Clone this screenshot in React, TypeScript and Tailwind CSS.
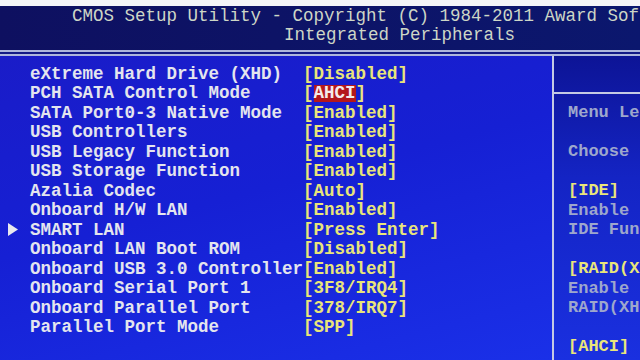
const items: { label: string; value: string; hot?: boolean; sub?: boolean }[] = [
  { label: "eXtreme Hard Drive (XHD)", value: "Disabled" },
  { label: "PCH SATA Control Mode", value: "AHCI", hot: true },
  { label: "SATA Port0-3 Native Mode", value: "Enabled" },
  { label: "USB Controllers", value: "Enabled" },
  { label: "USB Legacy Function", value: "Enabled" },
  { label: "USB Storage Function", value: "Enabled" },
  { label: "Azalia Codec", value: "Auto" },
  { label: "Onboard H/W LAN", value: "Enabled" },
  { label: "SMART LAN", value: "Press Enter", sub: true },
  { label: "Onboard LAN Boot ROM", value: "Disabled" },
  { label: "Onboard USB 3.0 Controller", value: "Enabled" },
  { label: "Onboard Serial Port 1", value: "3F8/IRQ4" },
  { label: "Onboard Parallel Port", value: "378/IRQ7" },
  { label: "Parallel Port Mode", value: "SPP" },
];

// help panel lines (only what fits on screen), "" = blank row
const help: { text: string; yellow?: boolean }[] = [
  { text: "Menu Le" },
  { text: "" },
  { text: "Choose" },
  { text: "" },
  { text: "[IDE]", yellow: true },
  { text: "Enable" },
  { text: "IDE Fun" },
  { text: "" },
  { text: "[RAID(X", yellow: true },
  { text: "Enable" },
  { text: "RAID(XH" },
  { text: "" },
  { text: "[AHCI]", yellow: true },
];

const App = () => {
  return (
    <div className="w-[640px] h-[360px] overflow-hidden flex flex-col bg-[#1616c4] font-['Liberation_Mono',monospace] text-[17.5px]">
      {/* Top glare strip */}
      <div className="h-[6px] bg-[#f4f5f8] shrink-0" />

      {/* Title */}
      <div className="h-[44px] shrink-0 bg-gradient-to-r from-[#0e1060] to-[#0b176e] text-[#cdd6c6] whitespace-nowrap pt-[1px]">
        <div className="h-[19px] leading-[19px] pl-[72px]">
          CMOS Setup Utility - Copyright (C) 1984-2011 Award Sof
        </div>
        <div className="h-[19px] leading-[19px] pl-[284px]">Integrated Peripherals</div>
      </div>

      {/* Double rule */}
      <div className="shrink-0 bg-[#131a86]">
        <div className="h-[2px] bg-[#aeb6dc]" />
        <div className="h-[2px]" />
        <div className="h-[2px] bg-[#aeb6dc]" />
      </div>

      <div className="flex-1 flex min-h-0">
        {/* Item list */}
        <div className="w-[552px] shrink-0 pt-[8px] font-bold whitespace-nowrap bg-[linear-gradient(165deg,#1a1cc8_0%,#1620d4_45%,#1a30e8_100%)]">
          {items.map((item) => (
            <div key={item.label} className="flex h-[19.5px] items-center">
              <div className="w-[30px] flex justify-center pr-[4px]">
                {item.sub && (
                  <svg width="10" height="13" viewBox="0 0 10 13">
                    <path d="M0 0 L10 6.5 L0 13 Z" fill="#e8e8ee" />
                  </svg>
                )}
              </div>
              <span className="w-[273px] text-[#e4e5ee]">{item.label}</span>
              <span className="text-[#e9e57a]">
                [
                {item.hot ? (
                  <span className="inline-block h-[17px] leading-[17px] bg-[#b3171c] text-[#f3eaea]">
                    {item.value}
                  </span>
                ) : (
                  item.value
                )}
                ]
              </span>
            </div>
          ))}
        </div>

        <div className="w-[2px] shrink-0 bg-[#c4cae4]" />

        {/* Help panel */}
        <div className="flex-1 flex flex-col bg-[linear-gradient(180deg,#0d1496_0%,#1424c4_40%,#1a30e0_100%)] whitespace-nowrap">
          <div className="h-[38px] shrink-0 border-b-2 border-[#c4cae4]" />
          <div className="pt-[9px] pl-[14px] font-bold text-[17px]">
            {help.map((line, i) => (
              <div
                key={i}
                className={`h-[19.5px] leading-[19.5px] ${line.yellow ? "text-[#e9e57a]" : "text-[#9ea7cc]"}`}
              >
                {line.text}
              </div>
            ))}
          </div>
        </div>
      </div>
    </div>
  );
};

export default App;
